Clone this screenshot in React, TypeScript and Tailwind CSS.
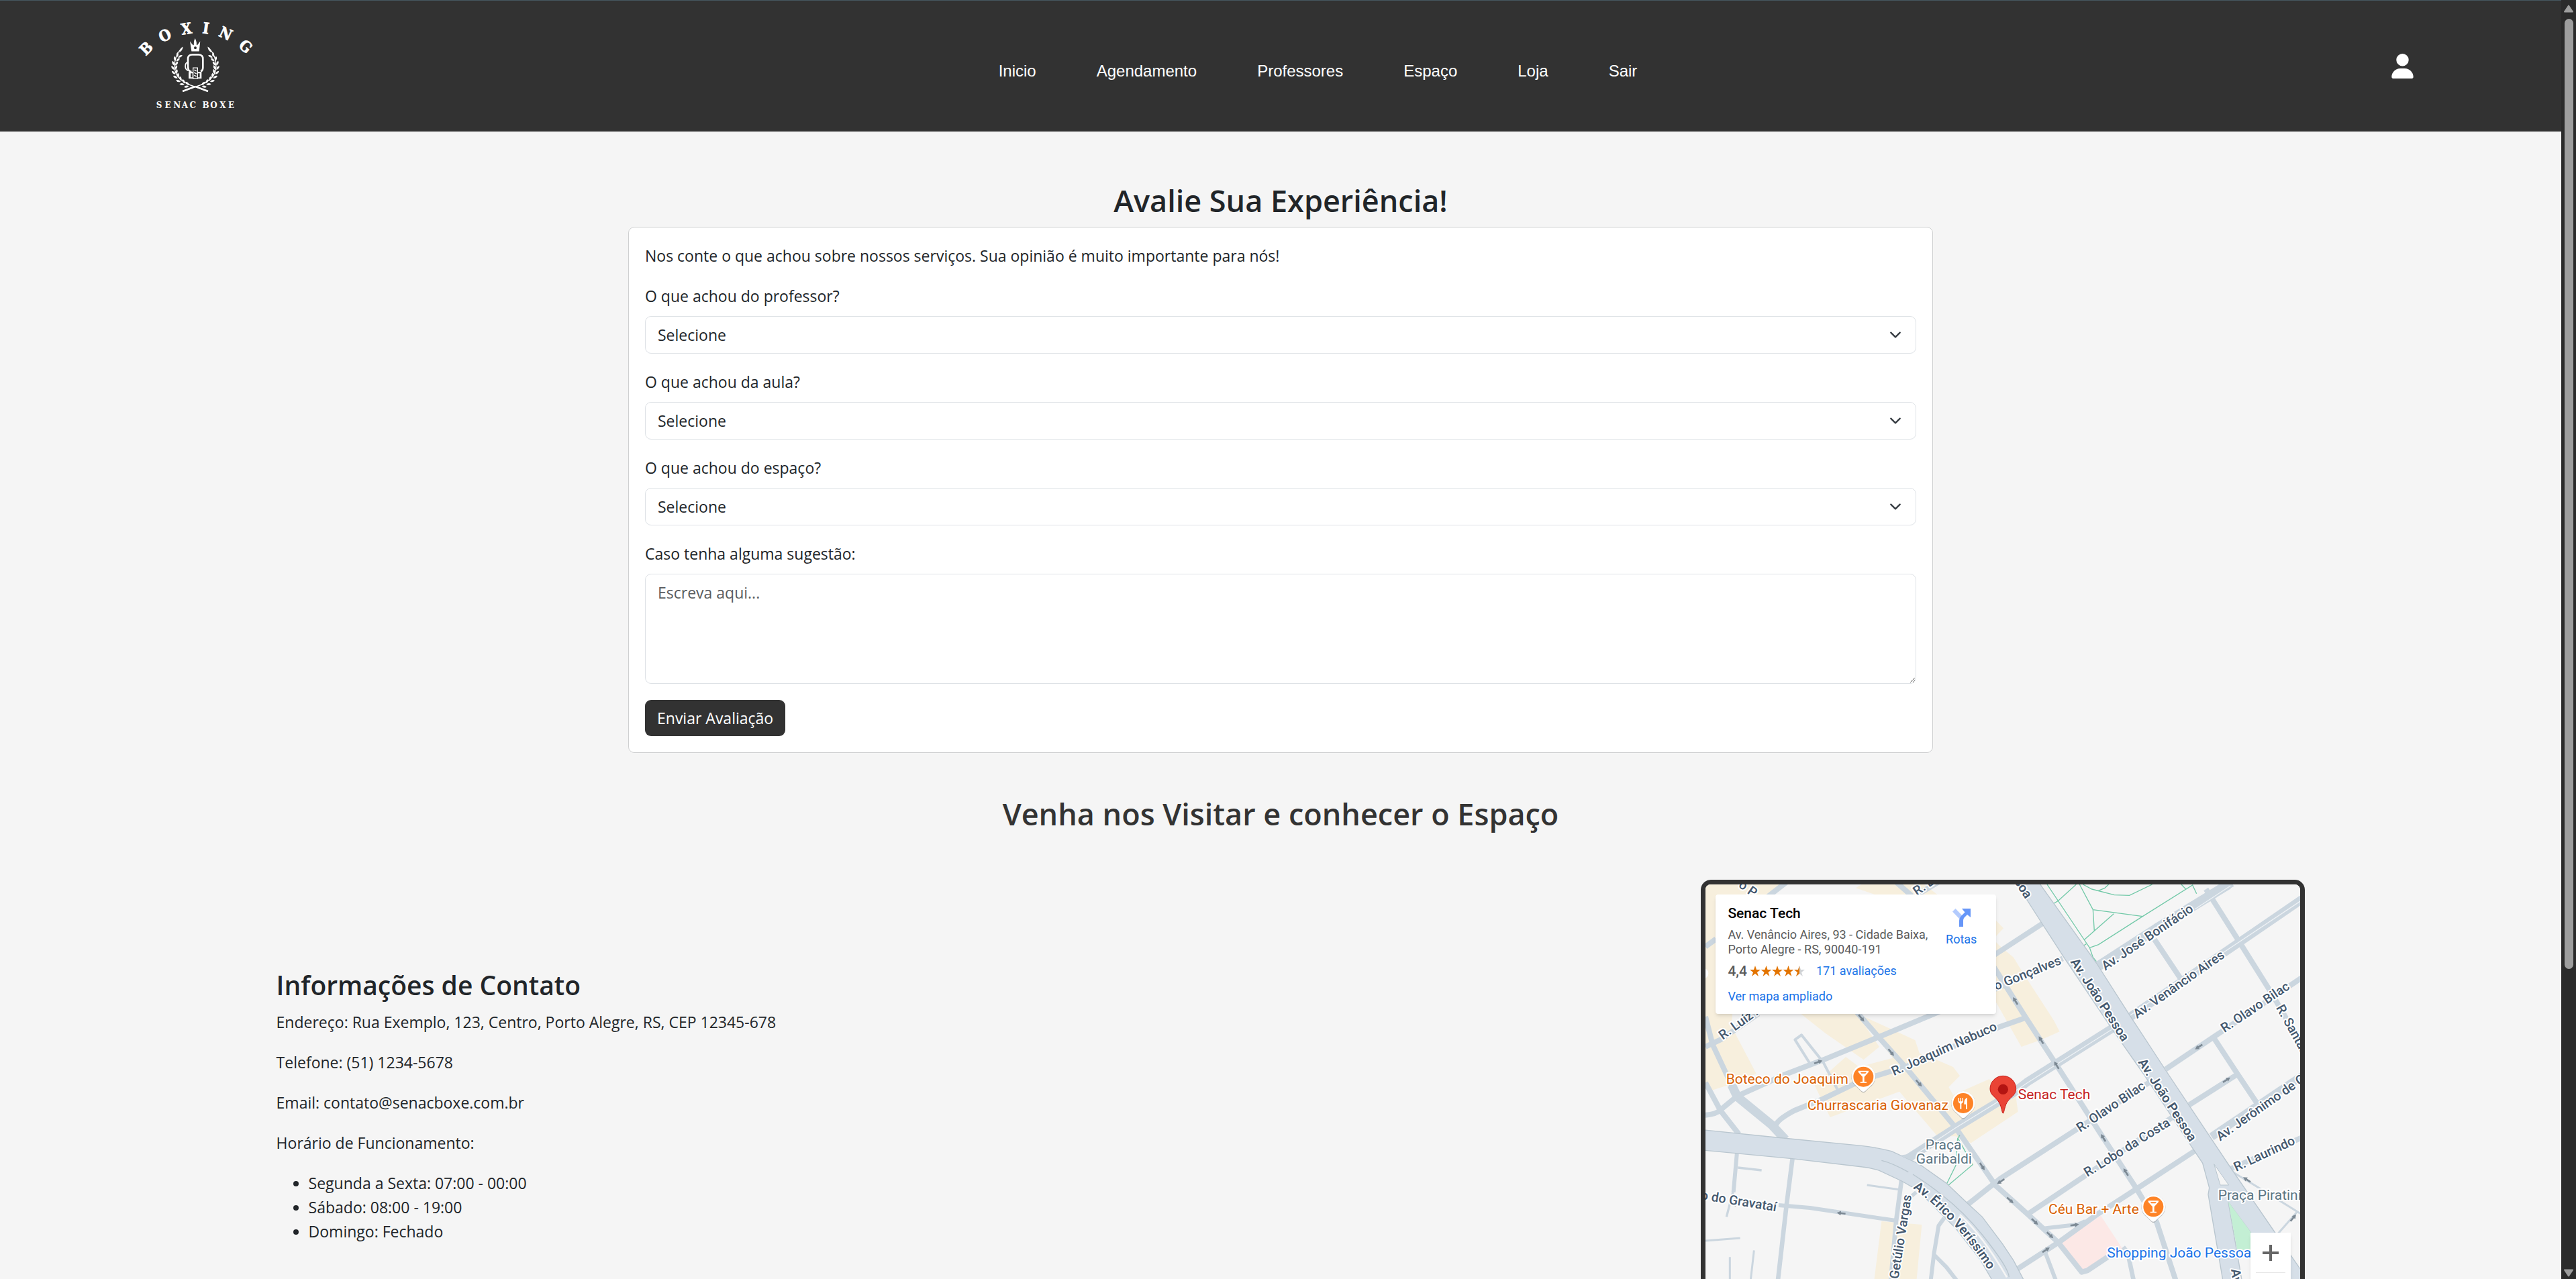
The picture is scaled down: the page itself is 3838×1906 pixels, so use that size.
import { useState } from "react";
import { FaUser } from "react-icons/fa6";

const navItems = ["Inicio", "Agendamento", "Professores", "Espaço", "Loja", "Sair"];

const questions = [
  { id: "professor", label: "O que achou do professor?" },
  { id: "aula", label: "O que achou da aula?" },
  { id: "espaco", label: "O que achou do espaço?" },
];

const hours = ["Segunda a Sexta: 07:00 - 00:00", "Sábado: 08:00 - 19:00", "Domingo: Fechado"];

/* Laurel leaves: angles run from the crossing of the stems up to the tip. */
const leafAngles = [18, 31, 44, 57, 70, 83, 96, 109, 122];

function Branch() {
  return (
    <g>
      <path d="M389 407L333 387C285 372 240 345 240 296C240 262 252 236 266 220" fill="none" stroke="#fff" strokeWidth={4} />
      <path d="M390 407L334 386" fill="none" stroke="#fff" strokeWidth={8} />
      <path d="M278 207q-16 8-17 26q14-6 17-26z" fill="#fff" />
      {leafAngles.map((t) => {
        const r = (t * Math.PI) / 180;
        const x = 333 - 93 * Math.sin(r);
        const y = 300 + 86 * Math.cos(r);
        const dir = (Math.atan2(-Math.sin(r), -Math.cos(r)) * 180) / Math.PI;
        return (
          <g key={t} transform={`translate(${x.toFixed(1)} ${y.toFixed(1)})`} fill="#fff">
            <path d="M1 2Q10-9 23-2Q15 9 1 2z" transform={`rotate(${(dir + 38).toFixed(1)})`} />
            <path d="M1-2Q10 9 23 2Q15-9 1-2z" transform={`rotate(${(dir - 38).toFixed(1)})`} />
          </g>
        );
      })}
    </g>
  );
}

const arcLetters = [
  { c: "B", x: 112, y: 214, r: -45 },
  { c: "O", x: 196, y: 155, r: -26 },
  { c: "X", x: 293, y: 125, r: -8 },
  { c: "I", x: 381, y: 123, r: 8 },
  { c: "N", x: 470, y: 147, r: 25 },
  { c: "G", x: 559, y: 205, r: 42 },
];

function Logo() {
  return (
    <svg viewBox="75 94 513 400" className="h-[133px] w-[171px] overflow-visible" role="img" aria-label="Boxing Senac Boxe">
      <g fill="#fff" fontWeight={700} textAnchor="middle" className="font-['DejaVu_Serif_Condensed','DejaVu_Serif',serif]">
        {arcLetters.map((l) => (
          <text key={l.c} fontSize={68} transform={`translate(${l.x} ${l.y}) rotate(${l.r})`} y={25} stroke="#fff" strokeWidth={2}>
            {l.c}
          </text>
        ))}
        <text fontSize={40} y={483} x="171 210 251 286 322 380 416 456 494">
          SENACBOXE
        </text>
      </g>
      <Branch />
      <g transform="translate(666 0) scale(-1 1)">
        <Branch />
      </g>
      <path d="M316 228L309 183L322 200L327 182L332 169L337 182L342 200L355 183L350 228z" fill="#fff" />
      <path d="M325 200V180M340 200V180" stroke="#323232" strokeWidth={3} />
      <circle cx="333" cy="212" r="6" fill="#323232" />
      <path d="M316 320C301 317 301 306 300 296V262Q300 243 319 243H348Q367 243 367 262V300Q367 314 357 318" fill="none" stroke="#fff" strokeWidth={8} />
      <path d="M300 277Q288 278 288 296Q289 310 301 314" fill="none" stroke="#fff" strokeWidth={5} />
      <path d="M303 320H361V350H303z" fill="#fff" />
      <path d="M312 326H320V344H312zM345 326H353V344H345z" fill="#323232" />
      <path d="M323 302H343V350H323z" fill="#323232" stroke="#fff" strokeWidth={4} />
      <path d="M328 311L338 316M328 323L338 328M328 335L338 340" stroke="#fff" strokeWidth={4} />
    </svg>
  );
}

type Road = { d: string; w?: number };

const roads: Road[] = [
  { d: "M340 110L430 40M63 332L110 298" },
  { d: "M63 780L130 748L300 632" },
  { d: "M63 645L95 770L165 920L205 1005" },
  { d: "M180 950L205 1003L360 1130L420 1195", w: 40 },
  { d: "M205 1000L420 903L590 838L840 735L1110 622L1362 520L1660 385" },
  { d: "M63 940L130 1065L212 1170M63 1085Q110 1082 130 1062L205 1000" },
  { d: "M378 1130Q385 1105 460 1065L590 1012L760 930L960 868L1380 690L1500 648" },
  { d: "M735 620L840 740L955 868L1180 1140L1360 1400L1505 1530L1640 1655L1745 1787L1770 1780L1860 1720" },
  { d: "M950 1290L1180 1143L1440 985L1500 938L1890 692", w: 38 },
  { d: "M1955 650L2450 312L2730 120", w: 38 },
  { d: "M1810 425L2080 250L2400 54", w: 44 },
  { d: "M2240 160L2420 54", w: 20 },
  { d: "M2300 75L2450 312L2590 535L2730 775" },
  { d: "M2070 300L2190 480" },
  { d: "M2730 470L2120 880" },
  { d: "M2045 940L1380 1370L1235 1485" },
  { d: "M2335 740L2440 900L2530 1035M2225 1040L2445 900" },
  { d: "M2325 1182L2730 910", w: 36 },
  { d: "M2400 1330L2730 1185" },
  { d: "M2150 1095L1505 1527" },
  { d: "M2255 1242L1990 1415L1820 1525L1640 1655L1455 1775" },
  { d: "M1350 420L1495 650L1625 850L1830 1170L1990 1415L2080 1565L2170 1840" },
  { d: "M1350 372L1575 225" },
  { d: "M204 1250L188 1430", w: 18 },
  { d: "M188 1420L157 1540M208 1320L314 1332", w: 10 },
  { d: "M453 1270L425 1490L385 1840", w: 20 },
  { d: "M390 1488L530 1500L915 1557", w: 18 },
  { d: "M940 1370L915 1560L890 1840", w: 20 },
  { d: "M785 1398L930 1418", w: 9 },
  { d: "M63 1647L218 1635M172 1720V1840M280 1690L263 1840", w: 9 },
  { d: "M975 1455L1005 1430", w: 16 },
  { d: "M1130 1545L1105 1580L1085 1700L1068 1840M1085 1710L1140 1765L1190 1830", w: 18 },
  { d: "M1575 1592L1730 1574L1760 1560M1580 1695L1635 1840", w: 18 },
  { d: "M1930 1675L1950 1700L1980 1840", w: 20 },
  { d: "M2420 1340L2520 1400L2730 1530M2600 1640L2710 1515", w: 9 },
  { d: "M530 855L463 748L492 727L590 850L655 975", w: 12 },
  { d: "M900 30L985 105M1010 100L1110 40" },
];

const zones = [
  "M63 54H430L340 110L200 300L180 690L290 900L200 940L90 975L63 940z",
  "M735 70L760 54H1040L1100 100H1250L1395 250L1362 285z",
  "M1350 300L1380 330L1440 380L1470 430L1620 662L1646 712L1560 750L1475 780L1350 560z",
  "M490 633H740L840 780L770 838L600 720z",
  "M745 633L1000 750L1020 810L1100 840L1170 870L1200 910L1150 960L1170 995L1330 925L1450 1000L1460 1070L1250 1210L1180 1180L1100 1180L930 980L620 1095L550 950L690 825L750 870L900 830z",
  "M850 1560L1030 1575L1005 1840H815z",
];

const greenPaths =
  "M1590 54L1765 315L1780 337L1795 380L1810 398M1720 54L1640 127L1615 142M1735 54L1795 167L2017 197M1795 167L1801 262M1888 185L1755 302M1780 337L1820 323L2017 197L2240 57L2258 95M1750 54L1790 75L1890 101L1958 103L2060 54M1817 83L1848 70L1865 54M2190 54L2210 75M1765 320L1745 333M1140 1395L1182 1310L1190 1190L1200 1175M1145 1402L1257 1307L1192 1190";

const arrows = [
  { x: 760, y: 652, r: 50 }, { x: 893, y: 805, r: 50 }, { x: 567, y: 848, r: -20 },
  { x: 1448, y: 575, r: -122 }, { x: 1563, y: 750, r: -122 }, { x: 1632, y: 862, r: -122 },
  { x: 2268, y: 780, r: 147 }, { x: 2392, y: 928, r: -33 }, { x: 1017, y: 943, r: 48 },
  { x: 1300, y: 1315, r: 57 }, { x: 1383, y: 1382, r: 147 }, { x: 1425, y: 1466, r: 42 },
  { x: 196, y: 1475, r: 92 }, { x: 670, y: 1524, r: -173 }, { x: 1841, y: 1187, r: -122 }, { x: 1942, y: 1340, r: -122 },
  { x: 1535, y: 1562, r: 43 }, { x: 1603, y: 1622, r: 43 }, { x: 1713, y: 1576, r: -8 }, { x: 1585, y: 1688, r: -33 },
  { x: 2483, y: 1374, r: -147 }, { x: 2690, y: 1545, r: -50 },
];

const streetLabels = [
  { t: "Av. José Bonifácio", x: 1850, y: 440, r: -34 },
  { t: "Av. Venâncio Aires", x: 1992, y: 655, r: -35 },
  { t: "R. Olavo Bilac", x: 2383, y: 718, r: -34 },
  { t: "o Gonçalves", x: 1362, y: 528, r: -22 },
  { t: "R. Santana", x: 2612, y: 605, r: 61 },
  { t: "R. Joaquim Nabuco", x: 905, y: 910, r: -24 },
  { t: "R. Luiz Afonso", x: 140, y: 750, r: -36 },
  { t: "o P", x: 208, y: 64, r: 35 },
  { t: "R. Lima", x: 1008, y: 106, r: -35 },
  { t: "R. Olavo Bilac", x: 1738, y: 1163, r: -34 },
  { t: "R. Lobo da Costa", x: 1770, y: 1363, r: -32 },
  { t: "Av. Jerônimo de Ornelas", x: 2363, y: 1202, r: -35 },
  { t: "R. Laurindo", x: 2435, y: 1338, r: -25 },
  { t: "o do Gravataí", x: 40, y: 1462, r: 9 },
  { t: "Getúlio Vargas", x: 925, y: 1820, r: -81 },
];

const avenueLabels = [
  { t: "Av. João Pessoa", x: 1693, y: 400, r: 57 },
  { t: "Av. João Pessoa", x: 1995, y: 848, r: 57 },
  { t: "soa", x: 1442, y: 42, r: 57 },
  { t: "Av.", x: 2412, y: 1775, r: 82 },
];

const places = [
  { t: "Boteco do Joaquim", x: 155, y: 945, c: "#d95f02" },
  { t: "Churrascaria Giovanaz", x: 518, y: 1063, c: "#d95f02" },
  { t: "Céu Bar + Arte", x: 1596, y: 1526, c: "#d95f02" },
  { t: "Senac Tech", x: 1460, y: 1015, c: "#c5221f" },
  { t: "Shopping João Pessoa", x: 1858, y: 1722, c: "#1a73e8" },
  { t: "Praça", x: 1046, y: 1238, c: "#5b7583" },
  { t: "Garibaldi", x: 1004, y: 1302, c: "#5b7583" },
  { t: "Praça Piratini", x: 2354, y: 1464, c: "#5b7583" },
];

function Pin({ x, y, fork }: { x: number; y: number; fork?: boolean }) {
  return (
    <g transform={`translate(${x} ${y})`}>
      <path d="M0 71C-8 71-14 60-30 46A54 54 0 1 1 30 46C14 60 8 71 0 71z" fill="#8a8f94" opacity={0.55} />
      <path d="M0 67C-8 67-14 57-30 43A53 53 0 1 1 30 43C14 57 8 67 0 67z" fill="#fff" />
      <circle r="45" fill="#fe8326" />
      {fork ? (
        <path d="M-22-24V-8Q-22 0-14 2V26H-8V2Q0 0 0-8V-24H-4V-8H-9V-24H-13V-8H-18V-24zM18-25Q4-20 4 0V5H12V26H18z" fill="#fff" />
      ) : (
        <path d="M-23-27H23V-21L4 0V22H14V27H-14V22H-4V0L-23-21zM-14-21L-9-15H9L14-21z" fill="#fff" fillRule="evenodd" />
      )}
    </g>
  );
}

function StreetMap() {
  return (
    <svg
      viewBox="63 54 2658 2064"
      preserveAspectRatio="xMinYMin slice"
      className="size-full font-[Roboto,sans-serif]"
      role="img"
      aria-label="Mapa da região do Senac Tech"
    >
      <path d="M63 54H2721V2118H63z" fill="#f5f5f5" />
      {zones.map((d) => (
        <path key={d} d={d} fill="#f7efdd" />
      ))}
      <path d="M1655 1652L1830 1535L1925 1680L1745 1795z" fill="#fce8e6" />
      <g fill="none" stroke="#cbd6df" strokeLinejoin="round">
        {roads.map((r) => (
          <path key={r.d} d={r.d} strokeWidth={r.w ?? 24} />
        ))}
      </g>
      <path d="M1000 1262L1180 1143L1440 983L1500 942L1880 702M1960 640L2180 490L2720 130M2250 165L2410 60" fill="none" stroke="#eef2f5" strokeWidth={4} />
      <path d={greenPaths} fill="none" stroke="#72c9a8" strokeWidth={4} />
      <path
        d="M40 1150L380 1185L760 1222Q840 1232 895 1247L1020 1305L1140 1390L1240 1485L1300 1540L1390 1660L1440 1735L1500 1850H1360L1290 1730L1180 1590L1010 1420L940 1380L840 1333Q800 1320 765 1317L450 1280L40 1241z"
        fill="#d6dfe8"
        stroke="#b9c6cf"
        strokeWidth={4}
      />
      <path d="M930 1265L1010 1255L990 1290z" fill="#cbd6df" />
      <path d="M850 1288Q900 1300 970 1340M990 1350Q1180 1470 1300 1620T1420 1810" fill="none" stroke="#b9c6cf" strokeWidth={4} />
      <path d="M1200 1530Q1300 1620 1410 1810" fill="none" stroke="#f5f5f5" strokeWidth={8} />
      <path
        d="M1443 34L1565 225L1665 380L1880 700L2020 900L2225 1210L2285 1300L2315 1410L2310 1440L2380 1850H2465L2400 1475L2500 1610L2660 1850H2740L2740 1800L2605 1605L2410 1320L2130 900L1960 640L1810 405L1545 34z"
        fill="#d6dfe8"
        stroke="#b9c6cf"
        strokeWidth={4}
      />
      <path d="M2336 1304L2402 1398H2364z" fill="#f5f5f5" stroke="#b9c6cf" strokeWidth={3} />
      <path d="M2400 1472L2500 1608V1690H2440z" fill="#c3efd4" />
      <g fill="none" stroke="#7c8994" strokeWidth={8}>
        {arrows.map((a) => (
          <g key={`${a.x}-${a.y}`} transform={`translate(${a.x} ${a.y}) rotate(${a.r})`}>
            <path d="M-19 0H6" />
            <path d="M2-10L20 0L2 10z" fill="#7c8994" stroke="none" />
          </g>
        ))}
      </g>
      <g fill="#44586e" stroke="#fff" strokeWidth={12} strokeLinejoin="round" paintOrder="stroke" fontWeight={500}>
        {streetLabels.map((l) => (
          <text key={`${l.t}-${l.x}`} fontSize={58} transform={`translate(${l.x} ${l.y}) rotate(${l.r})`}>
            {l.t}
          </text>
        ))}
        <g fontWeight={600}>
          {avenueLabels.map((l) => (
            <text key={`${l.t}-${l.x}`} fontSize={58} transform={`translate(${l.x} ${l.y}) rotate(${l.r})`}>
              {l.t}
            </text>
          ))}
          <path id="erico" d="M990 1412Q1170 1540 1330 1780Q1350 1810 1370 1850" fill="none" stroke="none" />
          <text fontSize={58}>
            <textPath href="#erico">Av. Érico Veríssimo</textPath>
          </text>
        </g>
      </g>
      <g stroke="#fff" strokeWidth={12} strokeLinejoin="round" paintOrder="stroke">
        {places.map((p) => (
          <text key={p.t} x={p.x} y={p.y} fontSize={63} fill={p.c}>
            {p.t}
          </text>
        ))}
      </g>
      <Pin x={769} y={914} />
      <Pin x={1215} y={1032} fork />
      <Pin x={2065} y={1495} />
      <path d="M1393 1077C1389 1077 1388 1060 1380 1038C1366 1004 1335 1000 1335 968A58 58 0 0 1 1451 968C1451 1000 1420 1004 1406 1038C1398 1060 1397 1077 1393 1077z" fill="#ea4335" stroke="#c5221f" strokeWidth={3} />
      <circle cx="1393" cy="970" r="23" fill="#b31412" />
      <circle cx="52" cy="452" r="24" fill="#fff" />
    </svg>
  );
}

const starPath = "M8 0L10 6H16L11 10L13 16L8 12L3 16L5 10L0 6H6z";

function Stars() {
  return (
    <svg viewBox="0 0 82 16" className="h-4 w-[82px]" role="img" aria-label="4,4 de 5 estrelas">
      {[0, 1, 2, 3].map((i) => (
        <path key={i} d={starPath} transform={`translate(${i * 16.5} 0)`} fill="#e37400" />
      ))}
      <path d={starPath} transform="translate(66 0)" fill="#d0d3d6" />
      <path d="M8 0V12L3 16L5 10L0 6H6z" transform="translate(66 0)" fill="#e37400" />
    </svg>
  );
}

function PlaceCard() {
  return (
    <div className="absolute top-[15px] left-[15px] flex h-[178px] w-[418px] justify-between rounded-sm bg-white pt-[14px] pr-[29px] pl-[18px] font-[Roboto,sans-serif] text-[18px] shadow-md">
      <div>
        <h4 className="text-[21px] leading-[28px] font-medium text-black">Senac Tech</h4>
        <p className="mt-[7px] leading-[22px] whitespace-nowrap text-[#5b5b5b]">
          Av. Venâncio Aires, 93 - Cidade Baixa,
          <br />
          Porto Alegre - RS, 90040-191
        </p>
        <div className="mt-[7px] mb-[10px] flex h-[28px] items-center">
          <span className="text-[21px] font-medium text-[#5b5b5b]">4,4</span>
          <span className="ml-1">
            <Stars />
          </span>
          <a href="#avaliacoes" className="ml-[17px] text-[#1a73e8]">171 avaliações</a>
        </div>
        <a href="#mapa" className="block leading-[28px] text-[#1a73e8]">Ver mapa ampliado</a>
      </div>
      <a href="#rotas" className="flex h-fit flex-col items-center pt-[7px] text-[#1a73e8]">
        <svg viewBox="0 0 27 27" className="size-[27px]" aria-hidden="true">
          <path d="M0 4.500L4.500 0L15 11L10.500 15.500z" fill="#b3cbfd" />
          <path d="M10 27V19Q10 14 13 11L18.500 5.500L14 0H27V13L22 9L17.500 13.500Q16 15 16 18V27z" fill="#6696f8" />
        </svg>
        <span className="mt-[5px] leading-[28px]">Rotas</span>
      </a>
    </div>
  );
}

function ZoomControl() {
  return (
    <div className="absolute right-[14px] bottom-[49px] flex w-[60px] flex-col bg-white px-2 shadow-md">
      <button type="button" aria-label="Aumentar zoom" className="flex h-[60px] items-center justify-center border-b border-[#e6e6e6]">
        <svg viewBox="0 0 24 24" className="size-6" aria-hidden="true">
          <path d="M0 12H24M12 0V24" stroke="#666" strokeWidth={4} />
        </svg>
      </button>
      <button type="button" aria-label="Diminuir zoom" className="flex h-[60px] items-center justify-center">
        <svg viewBox="0 0 24 24" className="size-6" aria-hidden="true">
          <path d="M0 12H24" stroke="#666" strokeWidth={4} />
        </svg>
      </button>
    </div>
  );
}

function Header() {
  return (
    <header className="flex h-[196px] shrink-0 items-center justify-between border-t border-[#46575f] bg-[#323232] pr-[220px] pl-[205px]">
      <a href="#inicio">
        <Logo />
      </a>
      <nav className="flex gap-[90px] pt-3.5 pr-3 font-['Liberation_Sans',Arial,sans-serif] text-[24px] leading-[36px] text-white">
        {navItems.map((item) => (
          <a key={item} href={`#${item.toLowerCase()}`}>
            {item}
          </a>
        ))}
      </nav>
      <a href="#perfil" aria-label="Perfil">
        <FaUser className="h-[37px] w-[33px] text-white" />
      </a>
    </header>
  );
}

function Scrollbar() {
  return (
    <div className="flex w-[22px] shrink-0 flex-col items-center bg-[#2b2b2b] pt-[7px] pb-[3px]" aria-hidden="true">
      <svg viewBox="0 0 14 12" className="h-3 w-[14px]">
        <path d="M7 1.500L13 10.500H1z" fill="#9e9e9e" stroke="#9e9e9e" strokeWidth={2} strokeLinejoin="round" />
      </svg>
      <div className="mt-[9px] flex min-h-0 flex-1 flex-col">
        <div className="h-[76%] w-[13px] rounded-full bg-[#9e9e9e]" />
      </div>
      <svg viewBox="0 0 14 12" className="h-3 w-[14px]">
        <path d="M7 10.500L13 1.500H1z" fill="#9e9e9e" stroke="#9e9e9e" strokeWidth={2} strokeLinejoin="round" />
      </svg>
    </div>
  );
}

const fieldClass = "w-full rounded-[9px] border border-[#dee2e6] bg-white px-[18px] py-[9px] leading-[36px]";

export default function App() {
  const [answers, setAnswers] = useState<Record<string, string>>({});
  const [suggestion, setSuggestion] = useState("");

  return (
    <div className="flex h-screen overflow-hidden bg-[#f5f5f5] font-['Open_Sans','Segoe_UI',sans-serif] text-[23px] leading-[36px] text-[#212529]">
      <div className="min-w-0 flex-1 overflow-hidden">
        <Header />
        <main>
          <section className="mx-auto max-w-[1944px] pt-[74px]">
            <h2 className="mb-2.5 text-center text-[45px] leading-[58px] font-semibold">Avalie Sua Experiência!</h2>
            <form className="rounded-[9px] border border-[#cfd0d1] bg-white p-6" onSubmit={(e) => e.preventDefault()}>
              <p className="mb-6">Nos conte o que achou sobre nossos serviços. Sua opinião é muito importante para nós!</p>
              {questions.map((q) => (
                <div key={q.id} className="mb-6">
                  <label htmlFor={q.id} className="mb-3 block">
                    {q.label}
                  </label>
                  <div className="relative">
                    <select
                      id={q.id}
                      className={`${fieldClass} block appearance-none`}
                      value={answers[q.id] ?? ""}
                      onChange={(e) => setAnswers({ ...answers, [q.id]: e.target.value })}
                    >
                      <option value="">Selecione</option>
                      <option value="otimo">Ótimo</option>
                      <option value="bom">Bom</option>
                      <option value="ruim">Ruim</option>
                    </select>
                    <svg viewBox="0 0 16 16" className="pointer-events-none absolute top-[19px] right-[22px] size-[18px]" aria-hidden="true">
                      <path d="m2 5 6 6 6-6" fill="none" stroke="#343a40" strokeWidth={2} strokeLinecap="round" strokeLinejoin="round" />
                    </svg>
                  </div>
                </div>
              ))}
              <label htmlFor="sugestao" className="mb-3 block">
                Caso tenha alguma sugestão:
              </label>
              <textarea
                id="sugestao"
                rows={4}
                placeholder="Escreva aqui..."
                className={`${fieldClass} mb-6 block h-[164px] placeholder:text-[#595c5f]`}
                value={suggestion}
                onChange={(e) => setSuggestion(e.target.value)}
              />
              <button type="submit" className="block rounded-[9px] bg-[#323232] px-[18px] py-[9px] text-white">
                Enviar Avaliação
              </button>
            </form>
          </section>

          <section className="mx-auto w-4/5 pt-[62px]">
            <h2 className="text-center text-[45px] leading-[58px] font-semibold text-[#333]">Venha nos Visitar e conhecer o Espaço</h2>
            <div className="mt-[69px] flex items-center justify-between">
              <div className="pl-[30px]">
                <h3 className="mb-3 text-[39px] leading-[50px] font-semibold">Informações de Contato</h3>
                <p className="mb-6">Endereço: Rua Exemplo, 123, Centro, Porto Alegre, RS, CEP 12345-678</p>
                <p className="mb-6">Telefone: (51) 1234-5678</p>
                <p className="mb-6">Email: contato@senacboxe.com.br</p>
                <p className="mb-6">Horário de Funcionamento:</p>
                <ul className="mb-7 list-disc pl-12">
                  {hours.map((h) => (
                    <li key={h}>{h}</li>
                  ))}
                </ul>
              </div>
              <div className="relative h-[702px] w-[900px] overflow-hidden rounded-[15px] border-[7px] border-[#323232]">
                <StreetMap />
                <PlaceCard />
                <ZoomControl />
              </div>
            </div>
          </section>
        </main>
      </div>
      <Scrollbar />
    </div>
  );
}
